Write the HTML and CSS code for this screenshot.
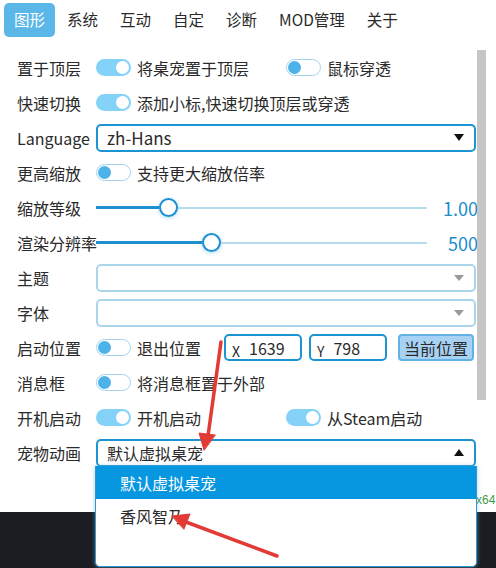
FILE: index.html
```html
<!DOCTYPE html>
<html lang="zh">
<head>
<meta charset="utf-8">
<link rel="stylesheet" href="styles.css">
</head>
<body>
<div class="app">
  <nav class="tabs">
    <span class="tab active">图形</span>
    <span class="tab">系统</span>
    <span class="tab">互动</span>
    <span class="tab">自定</span>
    <span class="tab">诊断</span>
    <span class="tab">MOD管理</span>
    <span class="tab">关于</span>
  </nav>
  <div class="rows">
    <div class="row">
      <span class="label">置于顶层</span>
      <span class="opt w190"><span class="toggle on"></span>将桌宠置于顶层</span>
      <span class="opt"><span class="toggle off"></span>鼠标穿透</span>
    </div>
    <div class="row">
      <span class="label">快速切换</span>
      <span class="opt"><span class="toggle on"></span>添加小标,快速切换顶层或穿透</span>
    </div>
    <div class="row">
      <span class="label">Language</span>
      <div class="select strong"><span class="sel-text latin">zh-Hans</span><span class="caret down dark"></span></div>
    </div>
    <div class="row">
      <span class="label">更高缩放</span>
      <span class="opt"><span class="toggle off"></span>支持更大缩放倍率</span>
    </div>
    <div class="row">
      <span class="label">缩放等级</span>
      <div class="slider"><span class="fill" style="width:63px"></span><span class="thumb"></span><span class="rest"></span></div>
      <span class="value">1.00</span>
    </div>
    <div class="row">
      <span class="label">渲染分辨率</span>
      <div class="slider"><span class="fill" style="width:106px"></span><span class="thumb"></span><span class="rest"></span></div>
      <span class="value">500</span>
    </div>
    <div class="row">
      <span class="label">主题</span>
      <div class="select light"><span class="sel-text"></span><span class="caret down grey"></span></div>
    </div>
    <div class="row">
      <span class="label">字体</span>
      <div class="select light"><span class="sel-text"></span><span class="caret down grey"></span></div>
    </div>
    <div class="row">
      <span class="label">启动位置</span>
      <span class="opt w128"><span class="toggle off"></span>退出位置</span>
      <span class="coord"><span class="axis">X</span>1639</span>
      <span class="coord"><span class="axis">Y</span>798</span>
      <span class="btn">当前位置</span>
    </div>
    <div class="row">
      <span class="label">消息框</span>
      <span class="opt"><span class="toggle off"></span>将消息框置于外部</span>
    </div>
    <div class="row">
      <span class="label">开机启动</span>
      <span class="opt w190"><span class="toggle on"></span>开机启动</span>
      <span class="opt"><span class="toggle on"></span>从Steam启动</span>
    </div>
    <div class="row">
      <span class="label">宠物动画</span>
      <div class="select strong"><span class="sel-text">默认虚拟桌宠</span><span class="caret up dark"></span></div>
    </div>
  </div>
  <div class="scrollbar"></div>
  <span class="build">x64</span>
</div>
<div class="taskbar"></div>
<div class="popup">
  <div class="item selected">默认虚拟桌宠</div>
  <div class="item">香风智乃</div>
</div>
<svg class="arrows" width="496" height="568" viewBox="0 0 496 568">
  <g stroke="#e23b36" stroke-width="3.5" stroke-linecap="round" fill="#e23b36">
    <line x1="221" y1="342" x2="208" y2="436"/>
    <polygon points="204,450 199,433 215,435" stroke-width="1"/>
    <line x1="277" y1="556" x2="186" y2="522"/>
    <polygon points="172,516 190,514 184,529" stroke-width="1"/>
  </g>
</svg>
</body>
</html>
```

FILE: styles.css
```css
* { box-sizing: border-box; }
html, body {
  margin: 0;
  padding: 0;
}
body {
  width: 496px;
  height: 568px;
  overflow: hidden;
  position: relative;
  background: #1c1d22;
  font-family: "Noto Sans CJK SC", "Noto Sans", sans-serif;
  font-size: 16px;
  color: #2a2a2a;
}
.app {
  position: relative;
  height: 512px;
  background: #fff;
}
.tabs {
  display: flex;
  gap: 2px;
  padding: 3px 4px 0;
  height: 37px;
}
.tab {
  display: flex;
  align-items: center;
  height: 34px;
  padding: 0 10px;
  border-radius: 5px;
  line-height: 1;
  font-size: 15.5px;
}
.tab.active {
  background: #5ab7e8;
  color: #fff;
}
.rows {
  padding: 13px 20px 0 17px;
}
.row {
  display: flex;
  align-items: center;
  height: 35px;
  line-height: 1;
}
.label {
  width: 79px;
  flex: none;
  white-space: nowrap;
}
.opt {
  display: flex;
  align-items: center;
  white-space: nowrap;
}
.w190 { width: 190px; flex: none; }
.w128 { width: 128px; flex: none; }
.toggle {
  width: 35px;
  height: 17px;
  border-radius: 9px;
  margin-right: 6px;
  display: flex;
  align-items: center;
  padding: 0 2px;
  flex: none;
}
.toggle::after {
  content: "";
  width: 13px;
  height: 13px;
  border-radius: 50%;
}
.toggle.on {
  background: #84d2f7;
  justify-content: flex-end;
}
.toggle.on::after { background: #fff; }
.toggle.off {
  background: #fff;
  border: 1px solid #a3d3ee;
  padding: 0 1px;
}
.toggle.off::after { background: #4eb2ea; }
.select {
  flex: 1;
  height: 28px;
  border-radius: 5px;
  display: flex;
  align-items: center;
  padding: 0 10px 0 9px;
  background: #fff;
}
.select.strong { border: 2px solid #1c93d2; }
.select.light { border: 2px solid #aad6ec; }
.sel-text { flex: 1; }
.sel-text.latin { font-size: 17px; }
.caret {
  width: 0;
  height: 0;
  border-left: 5px solid transparent;
  border-right: 5px solid transparent;
}
.caret.down.dark { border-top: 7px solid #111; }
.caret.down.grey { border-top: 6px solid #999; }
.caret.up.dark { border-bottom: 7px solid #111; }
.slider {
  width: 331px;
  flex: none;
  display: flex;
  align-items: center;
  height: 20px;
}
.fill {
  height: 3px;
  background: #1c90d0;
}
.thumb {
  width: 19px;
  height: 19px;
  border-radius: 50%;
  border: 2px solid #1c90d0;
  background: #fff;
  box-shadow: 0 1px 4px rgba(28, 144, 208, 0.35);
  flex: none;
}
.rest {
  flex: 1;
  height: 2px;
  background: #b7dcef;
}
.value {
  flex: 1;
  text-align: right;
  margin-right: -2px;
  color: #1a8ccb;
  font-size: 18px;
}
.coord {
  width: 78px;
  height: 27px;
  border: 2px solid #1c93d2;
  border-radius: 5px;
  display: flex;
  align-items: center;
  padding: 0 6px;
  margin-right: 7px;
  font-size: 16px;
}
.axis {
  font-size: 14px;
  margin-top: 6px;
  margin-right: 9px;
}
.btn {
  margin-left: 4px;
  width: 76px;
  height: 27px;
  border: 2px solid #62b2e6;
  background: #a8d2f4;
  border-radius: 4px;
  display: flex;
  align-items: center;
  justify-content: center;
  font-size: 16px;
}
.scrollbar {
  position: absolute;
  left: 477px;
  top: 50px;
  width: 9px;
  height: 350px;
  background: #c6c6c6;
}
.build {
  position: absolute;
  left: 476px;
  top: 493px;
  font-size: 12px;
  color: #3f9a46;
  font-family: "Liberation Sans", sans-serif;
}
.taskbar { height: 56px; }
.popup {
  position: absolute;
  left: 95px;
  top: 466px;
  width: 382px;
  height: 101px;
  background: #fff;
  border: 1px solid #2a9ad6;
  border-top: none;
  border-radius: 0 0 5px 5px;
  box-shadow: 0 0 4px rgba(120, 180, 220, 0.6);
  overflow: hidden;
}
.item {
  height: 33px;
  display: flex;
  align-items: center;
  padding-left: 24px;
  font-size: 16px;
}
.item.selected {
  background: #0796e0;
  color: #fff;
}
.arrows {
  position: absolute;
  left: 0;
  top: 0;
  pointer-events: none;
}
```
